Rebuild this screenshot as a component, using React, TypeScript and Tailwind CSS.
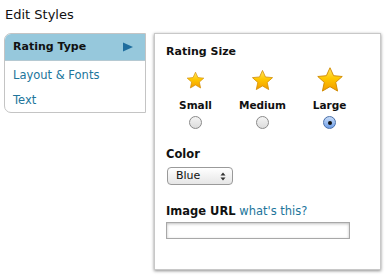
import React from "react";

const font = { fontFamily: '"DejaVu Sans", "Liberation Sans", sans-serif' };

function Star({ size }: { size: number }) {
  const id = "g" + size;
  return (
    <svg width={size} height={size} viewBox="0 0 24 24">
      <defs>
        <linearGradient id={id} x1="0" y1="0" x2="0" y2="1">
          <stop offset="0" stopColor="#ffe66a" />
          <stop offset="0.45" stopColor="#ffc800" />
          <stop offset="1" stopColor="#f29a00" />
        </linearGradient>
      </defs>
      <path
        d="M12 1.5 L15.1 8.3 L22.5 9 L16.9 14 L18.5 21.5 L12 17.7 L5.5 21.5 L7.1 14 L1.5 9 L8.9 8.3 Z"
        fill={`url(#${id})`}
        stroke="#d08a00"
        strokeWidth="0.8"
        strokeLinejoin="round"
      />
    </svg>
  );
}

function Radio({ checked }: { checked?: boolean }) {
  return checked ? (
    <div className="w-[13px] h-[13px] rounded-full border border-[#4a6fa8] bg-gradient-to-b from-[#c8dcf8] to-[#6f9ee6] flex items-center justify-center">
      <div className="w-[4px] h-[4px] rounded-full bg-[#111]" />
    </div>
  ) : (
    <div className="w-[13px] h-[13px] rounded-full border border-[#8a8a8a] bg-gradient-to-b from-[#f4f4f4] to-[#dcdcdc]" />
  );
}

export default function App() {
  const opts = [
    { label: "Small", size: 19, checked: false },
    { label: "Medium", size: 23, checked: false },
    { label: "Large", size: 28, checked: true },
  ];
  return (
    <div className="w-[390px] h-[279px] bg-white text-[#111]" style={font}>
      <div className="pl-[5px] pt-[7px] h-[33px] text-[13px] leading-[16px]">Edit Styles</div>
      <div className="flex items-start pl-[4px] gap-[8px]">
        <div className="w-[142px] h-[80px] border border-[#c4c4c4] rounded-l-[7px] overflow-hidden bg-white">
          <div className="h-[27px] bg-[#96c8dc] border-b border-[#b5c9d2] flex items-center justify-between pl-[8px] pr-[12px]">
            <span className="text-[11px] font-bold">Rating Type</span>
            <svg width="10" height="10" viewBox="0 0 10 10">
              <path d="M0 0.5 L10 5 L0 9.5 Z" fill="#1f6d9e" />
            </svg>
          </div>
          <div className="pl-[8px] pt-[6px] text-[11.5px] text-[#21759b] leading-[16px]">Layout &amp; Fonts</div>
          <div className="pl-[8px] pt-[9px] text-[11.5px] text-[#21759b] leading-[16px]">Text</div>
        </div>
        <div className="w-[227px] h-[237px] border border-[#c8c8c8] bg-white shadow-[0_1px_3px_rgba(0,0,0,0.45)] pl-[11px] pt-[10px]">
          <div className="text-[11px] font-bold leading-[16px]">Rating Size</div>
          <div className="flex ml-[-4px] mt-[5px]">
            {opts.map((o) => (
              <div key={o.label} className="w-[67px] flex flex-col items-center">
                <div className="h-[30px] flex items-center justify-center">
                  <Star size={o.size} />
                </div>
                <div className="text-[10.5px] font-bold leading-[14px] mt-[3px]">{o.label}</div>
                <div className="mt-[4px]">
                  <Radio checked={o.checked} />
                </div>
              </div>
            ))}
          </div>
          <div className="text-[11.5px] font-bold leading-[16px] mt-[17px]">Color</div>
          <div className="mt-[5px] ml-[1px] w-[66px] h-[18px] border border-[#9a9a9a] rounded-[4px] bg-gradient-to-b from-white to-[#e6e6e6] flex items-center justify-between pl-[8px] pr-[6px]">
            <span className="text-[11px] leading-[12px]">Blue</span>
            <svg width="6" height="9" viewBox="0 0 6 9">
              <path d="M0.5 3.5 L3 0.5 L5.5 3.5 Z M0.5 5.5 L3 8.5 L5.5 5.5 Z" fill="#333" />
            </svg>
          </div>
          <div className="text-[11.5px] leading-[16px] mt-[18px]">
            <span className="font-bold">Image URL</span>{" "}
            <span className="text-[#21759b]">what's this?</span>
          </div>
          <div className="mt-[3px] w-[184px] h-[17px] border border-[#a8a8a8] bg-white shadow-[inset_0_1px_3px_rgba(0,0,0,0.25)]" />
        </div>
      </div>
    </div>
  );
}
